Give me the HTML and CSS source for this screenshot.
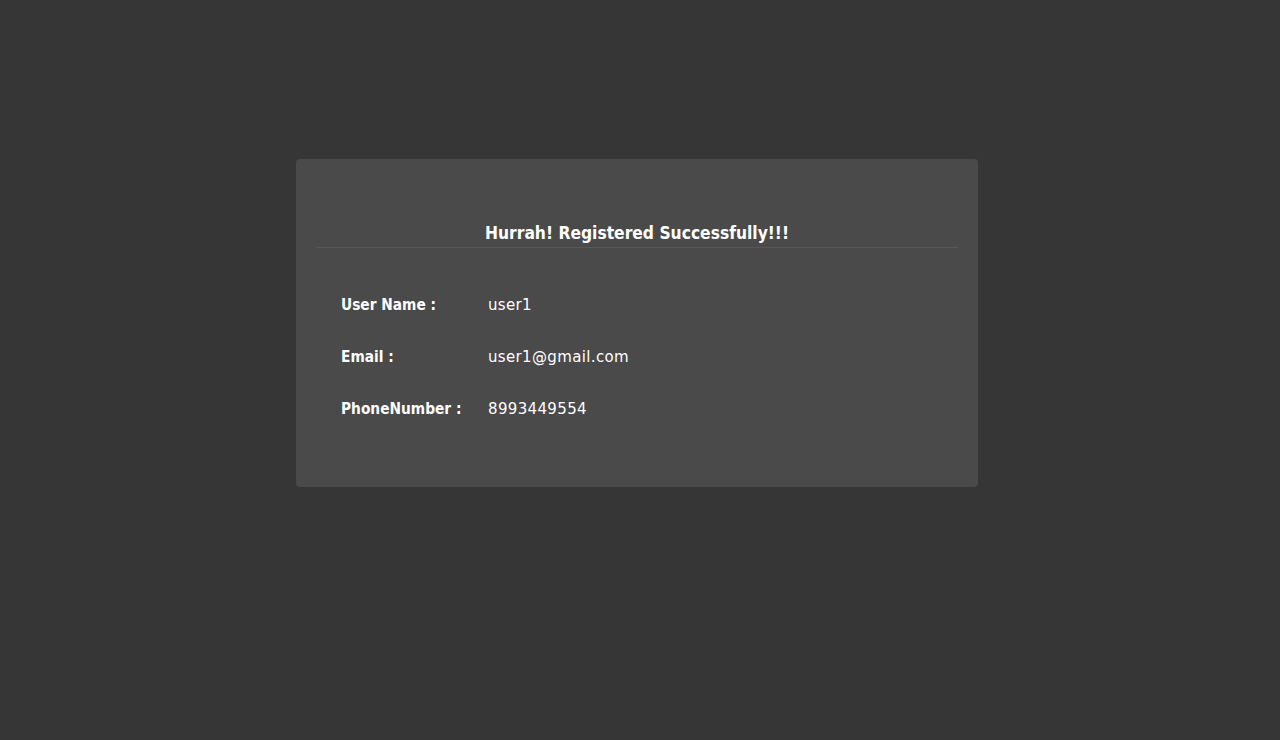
FILE: index.html
```html
<!DOCTYPE html>
<html>
<head>
<meta charset="utf-8">
<link rel="stylesheet" href="styles.css">
</head>
<body>
<div class="page">
  <div class="card">
    <h2 class="title">Hurrah! Registered Successfully!!!</h2>
    <div class="details">
      <div class="row"><span class="label">User Name :</span><span class="value">user1</span></div>
      <div class="row"><span class="label">Email :</span><span class="value">user1@gmail.com</span></div>
      <div class="row"><span class="label">PhoneNumber :</span><span class="value">8993449554</span></div>
    </div>
  </div>
</div>
</body>
</html>
```
FILE: styles.css
```css
html, body {
  margin: 0;
  padding: 0;
  background: #363636;
}
body {
  font-family: "DejaVu Sans Condensed", "DejaVu Sans", sans-serif;
  color: #ffffff;
}
.page {
  display: flex;
  justify-content: center;
  padding: 159px 6px 0 0;
}
.card {
  width: 682px;
  height: 328px;
  box-sizing: border-box;
  background: #4a4a4a;
  border-radius: 4px;
  padding: 62px 20px 0 20px;
}
.title {
  margin: 0;
  text-align: center;
  font-size: 17.3px;
  font-weight: bold;
  line-height: 24px;
  padding-bottom: 2px;
  border-bottom: 1px solid #575757;
}
.details {
  padding: 47px 25px 0 25px;
  display: flex;
  flex-direction: column;
  gap: 32px;
}
.row {
  display: flex;
  line-height: 20px;
  font-size: 15px;
}
.label {
  width: 147px;
  font-weight: bold;
  font-size: 15.3px;
}
.value {
  font-family: "DejaVu Sans", sans-serif;
  letter-spacing: 0.35px;
}
```
